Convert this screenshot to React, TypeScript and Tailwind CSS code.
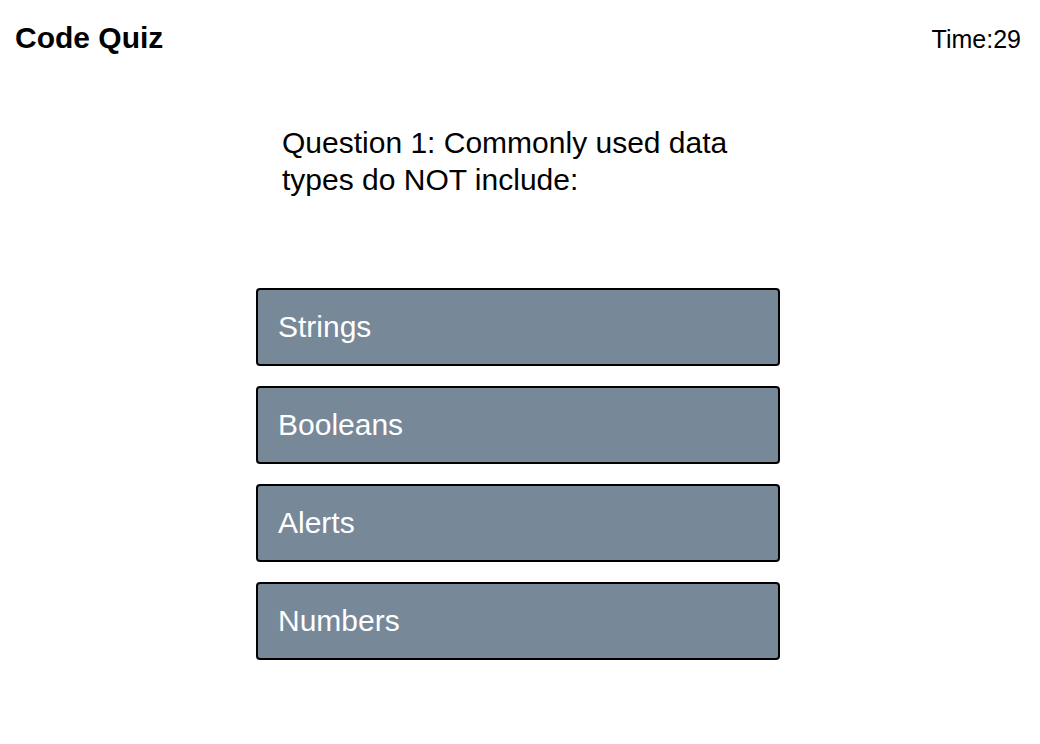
const answers = ['Strings', 'Booleans', 'Alerts', 'Numbers'];

export default function App() {
  return (
    <div className="min-h-[744px] bg-white font-['Liberation_Sans',Arial,sans-serif] text-black">
      <header className="flex items-start justify-between pl-[15px] pr-[19px] pt-[21px]">
        <h1 className="text-[30px] font-bold leading-[34px]">Code Quiz</h1>
        <div className="pt-[4px] text-[25px] leading-[29px]">Time:29</div>
      </header>

      <main className="mx-auto w-[528px]">
        <p className="mt-[69px] px-[26px] text-[30px] leading-[37px]">
          Question 1: Commonly used data types do NOT include:
        </p>

        <ul className="mt-[90px] flex flex-col gap-[20px]">
          {answers.map((a) => (
            <li key={a}>
              <button className="h-[78px] w-[524px] rounded-[4px] border-2 border-black bg-[#778899] px-[20px] pb-[2px] text-left text-[30px] text-white">
                {a}
              </button>
            </li>
          ))}
        </ul>
      </main>
    </div>
  );
}
